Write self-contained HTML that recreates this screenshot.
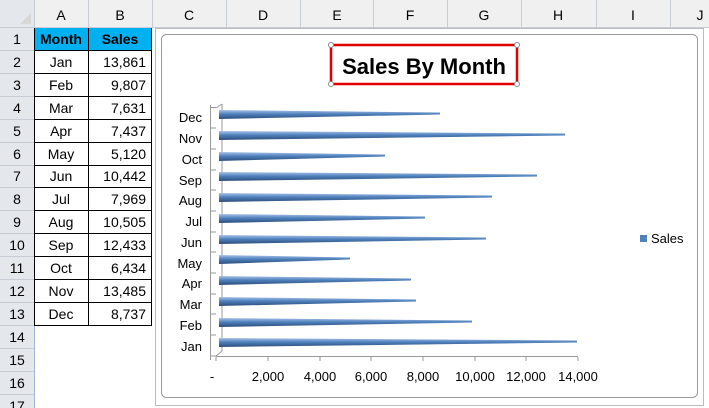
<!DOCTYPE html>
<html><head><style>
body{margin:0;width:709px;height:408px;overflow:hidden;background:#fff;font-family:"Liberation Sans",sans-serif;position:relative}
.a{position:absolute}
</style></head><body>
<svg class="a" style="left:0;top:0" width="709" height="408">
<defs>
<linearGradient id="bg" x1="0" y1="0" x2="0" y2="1"><stop offset="0" stop-color="#a9c3e8"/><stop offset=".45" stop-color="#4f81bd"/><stop offset="1" stop-color="#2c4d7a"/></linearGradient>
</defs>
<rect x="0" y="0" width="709" height="28" fill="#f0f0f0"/>
<rect x="0" y="0" width="34" height="408" fill="#e4e7ec"/>
<g stroke="#c8ccd4" stroke-width="1">
<path d="M34.5 0V28M88.5 0V28M152.5 0V28M226.5 0V28M300.5 0V28M373.5 0V28M447.5 0V28M521.5 0V28M596.5 0V28M670.5 0V28M0 27.5H709"/>
<path d="M0 50.5H34M0 73.5H34M0 96.5H34M0 119.5H34M0 142.5H34M0 165.5H34M0 187.5H34M0 210.5H34M0 233.5H34M0 256.5H34M0 279.5H34M0 302.5H34M0 325.5H34M0 348.5H34M0 371.5H34M0 394.5H34"/>
</g>
<path d="M34.5 28V408" stroke="#9fb6d8"/>
<path d="M20 24 L31 13 L31 24Z" fill="#d8d8d8"/>
<g font-size="14" fill="#000" text-anchor="middle">
<text x="61" y="20">A</text><text x="120" y="20">B</text><text x="189" y="20">C</text><text x="263" y="20">D</text><text x="337" y="20">E</text><text x="410" y="20">F</text><text x="484" y="20">G</text><text x="558" y="20">H</text><text x="633" y="20">I</text><text x="700" y="20">J</text>
</g>
<rect x="34" y="28" width="118" height="23" fill="#00b0f0"/>
<g stroke="#000"><path d="M34.5 28V326M88.5 28V326M151.5 28V326M34 50.5H152M34 73.5H152M34 96.5H152M34 119.5H152M34 142.5H152M34 165.5H152M34 187.5H152M34 210.5H152M34 233.5H152M34 256.5H152M34 279.5H152M34 302.5H152M34 325.5H152"/></g>
<g font-size="14" text-anchor="middle">
<text x="17" y="44">1</text><text x="17" y="67">2</text><text x="17" y="90">3</text><text x="17" y="113">4</text><text x="17" y="136">5</text><text x="17" y="159">6</text><text x="17" y="181">7</text><text x="17" y="204">8</text><text x="17" y="227">9</text><text x="17" y="250">10</text><text x="17" y="273">11</text><text x="17" y="296">12</text><text x="17" y="319">13</text><text x="17" y="342">14</text><text x="17" y="365">15</text><text x="17" y="388">16</text><text x="17" y="411">17</text>
<text x="61" y="44" font-weight="bold">Month</text><text x="120" y="44" font-weight="bold">Sales</text>
<text x="61" y="67">Jan</text><text x="61" y="90">Feb</text><text x="61" y="113">Mar</text><text x="61" y="136">Apr</text><text x="61" y="159">May</text><text x="61" y="181">Jun</text><text x="61" y="204">Jul</text><text x="61" y="227">Aug</text><text x="61" y="250">Sep</text><text x="61" y="273">Oct</text><text x="61" y="296">Nov</text><text x="61" y="319">Dec</text>
</g>
<g font-size="14" text-anchor="end">
<text x="146" y="67">13,861</text><text x="146" y="90">9,807</text><text x="146" y="113">7,631</text><text x="146" y="136">7,437</text><text x="146" y="159">5,120</text><text x="146" y="181">10,442</text><text x="146" y="204">7,969</text><text x="146" y="227">10,505</text><text x="146" y="250">12,433</text><text x="146" y="273">6,434</text><text x="146" y="296">13,485</text><text x="146" y="319">8,737</text>
</g>
<rect x="155.5" y="28.5" width="548" height="377" fill="#fff" stroke="#bbb"/>
<rect x="161.5" y="34.5" width="536" height="363" rx="5" fill="#fff" stroke="#999"/>
<rect x="331" y="45" width="186" height="39" fill="#fff" stroke="#e00000" stroke-width="2.5"/>
<g fill="#fff" stroke="#888"><circle cx="331" cy="45" r="2.5"/><circle cx="517" cy="45" r="2.5"/><circle cx="331" cy="84" r="2.5"/><circle cx="517" cy="84" r="2.5"/></g>
<text x="424" y="74" font-size="22" font-weight="bold" text-anchor="middle">Sales By Month</text>
<g stroke="#999" fill="none"><path d="M216 356.5H578M222 104V351L216 356M216 108L222 104"/>
<path d="M216 357V361M268 357V361M320 357V361M371 357V361M423 357V361M475 357V361M526 357V361M578 357V361"/>
<path d="M210.5 105V360M210 107.5H216M210 128H216M210 149H216M210 170H216M210 190H216M210 211H216M210 232H216M210 252H216M210 273H216M210 294H216M210 314H216M210 335H216M210 356H216"/></g>
<g font-size="13" text-anchor="end">
<text x="202" y="122">Dec</text><text x="202" y="143">Nov</text><text x="202" y="164">Oct</text><text x="202" y="185">Sep</text><text x="202" y="205">Aug</text><text x="202" y="226">Jul</text><text x="202" y="247">Jun</text><text x="202" y="268">May</text><text x="202" y="288">Apr</text><text x="202" y="309">Mar</text><text x="202" y="330">Feb</text><text x="202" y="351">Jan</text>
</g>
<g font-size="13" text-anchor="middle">
<text x="212" y="381">-</text><text x="268" y="381">2,000</text><text x="320" y="381">4,000</text><text x="371" y="381">6,000</text><text x="423" y="381">8,000</text><text x="475" y="381">10,000</text><text x="526" y="381">12,000</text><text x="578" y="381">14,000</text>
</g>
<g fill="url(#bg)">
<polygon points="219,110 440,112.5 440,114.5 219,119"/>
<polygon points="219,131 565,133.5 565,135.5 219,140"/>
<polygon points="219,152 385,154.5 385,156.5 219,161"/>
<polygon points="219,172 537,174.5 537,176.5 219,181"/>
<polygon points="219,193 492,195.5 492,197.5 219,202"/>
<polygon points="219,214 425,216.5 425,218.5 219,223"/>
<polygon points="219,235 486,237.5 486,239.5 219,244"/>
<polygon points="219,255 350,257.5 350,259.5 219,264"/>
<polygon points="219,276 411,278.5 411,280.5 219,285"/>
<polygon points="219,297 416,299.5 416,301.5 219,306"/>
<polygon points="219,318 472,320.5 472,322.5 219,327"/>
<polygon points="219,338 577,340.5 577,342.5 219,347"/>
</g>
<rect x="640" y="235" width="7" height="7" fill="#4f81bd"/>
<text x="651" y="243" font-size="13">Sales</text>
</svg>
</body></html>
